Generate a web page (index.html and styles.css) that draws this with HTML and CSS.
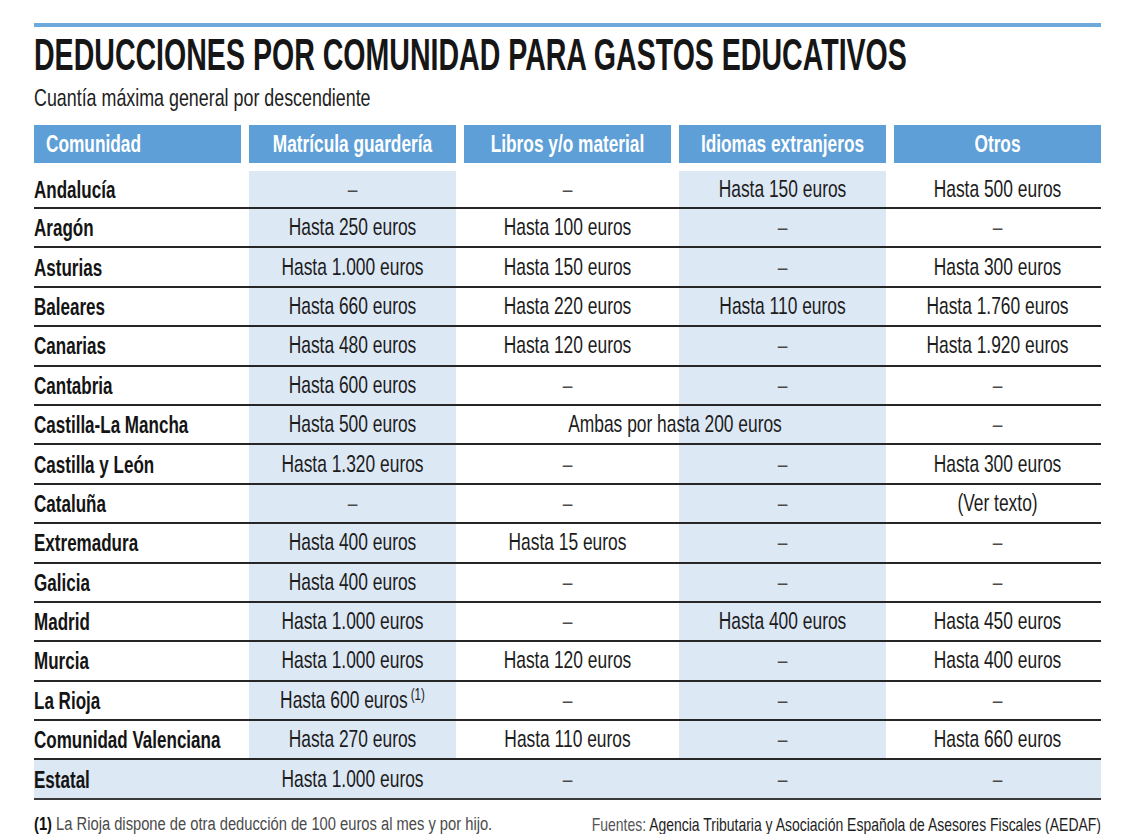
FILE: index.html
```html
<!DOCTYPE html>
<html lang="es">
<head>
<meta charset="utf-8">
<title>Deducciones por comunidad para gastos educativos</title>
<link rel="stylesheet" href="styles.css">
</head>
<body>
<div class="page">
  <div class="bar"></div>
  <h1 class="title"><span class="t">DEDUCCIONES POR COMUNIDAD PARA GASTOS EDUCATIVOS</span></h1>
  <p class="subtitle"><span class="t">Cuantía máxima general por descendiente</span></p>

  <div class="table">
    <div class="head">
      <div class="hc left"><span class="t">Comunidad</span></div>
      <div class="hc"><span class="t">Matrícula guardería</span></div>
      <div class="hc"><span class="t">Libros y/o material</span></div>
      <div class="hc"><span class="t">Idiomas extranjeros</span></div>
      <div class="hc"><span class="t">Otros</span></div>
    </div>

    <div class="row first">
      <div class="c name"><span class="t">Andalucía</span></div>
      <div class="c shade"><span class="t dash">–</span></div>
      <div class="c"><span class="t dash">–</span></div>
      <div class="c shade"><span class="t">Hasta 150 euros</span></div>
      <div class="c"><span class="t">Hasta 500 euros</span></div>
    </div>
    <div class="row">
      <div class="c name"><span class="t">Aragón</span></div>
      <div class="c shade"><span class="t">Hasta 250 euros</span></div>
      <div class="c"><span class="t">Hasta 100 euros</span></div>
      <div class="c shade"><span class="t dash">–</span></div>
      <div class="c"><span class="t dash">–</span></div>
    </div>
    <div class="row">
      <div class="c name"><span class="t">Asturias</span></div>
      <div class="c shade"><span class="t">Hasta 1.000 euros</span></div>
      <div class="c"><span class="t">Hasta 150 euros</span></div>
      <div class="c shade"><span class="t dash">–</span></div>
      <div class="c"><span class="t">Hasta 300 euros</span></div>
    </div>
    <div class="row">
      <div class="c name"><span class="t">Baleares</span></div>
      <div class="c shade"><span class="t">Hasta 660 euros</span></div>
      <div class="c"><span class="t">Hasta 220 euros</span></div>
      <div class="c shade"><span class="t">Hasta 110 euros</span></div>
      <div class="c"><span class="t">Hasta 1.760 euros</span></div>
    </div>
    <div class="row">
      <div class="c name"><span class="t">Canarias</span></div>
      <div class="c shade"><span class="t">Hasta 480 euros</span></div>
      <div class="c"><span class="t">Hasta 120 euros</span></div>
      <div class="c shade"><span class="t dash">–</span></div>
      <div class="c"><span class="t">Hasta 1.920 euros</span></div>
    </div>
    <div class="row">
      <div class="c name"><span class="t">Cantabria</span></div>
      <div class="c shade"><span class="t">Hasta 600 euros</span></div>
      <div class="c"><span class="t dash">–</span></div>
      <div class="c shade"><span class="t dash">–</span></div>
      <div class="c"><span class="t dash">–</span></div>
    </div>
    <div class="row">
      <div class="c name"><span class="t">Castilla-La Mancha</span></div>
      <div class="c shade"><span class="t">Hasta 500 euros</span></div>
      <div class="c span2"><span class="t">Ambas por hasta 200 euros</span></div>
      <div class="c"><span class="t dash">–</span></div>
    </div>
    <div class="row">
      <div class="c name"><span class="t">Castilla y León</span></div>
      <div class="c shade"><span class="t">Hasta 1.320 euros</span></div>
      <div class="c"><span class="t dash">–</span></div>
      <div class="c shade"><span class="t dash">–</span></div>
      <div class="c"><span class="t">Hasta 300 euros</span></div>
    </div>
    <div class="row">
      <div class="c name"><span class="t">Cataluña</span></div>
      <div class="c shade"><span class="t dash">–</span></div>
      <div class="c"><span class="t dash">–</span></div>
      <div class="c shade"><span class="t dash">–</span></div>
      <div class="c"><span class="t">(Ver texto)</span></div>
    </div>
    <div class="row">
      <div class="c name"><span class="t">Extremadura</span></div>
      <div class="c shade"><span class="t">Hasta 400 euros</span></div>
      <div class="c"><span class="t">Hasta 15 euros</span></div>
      <div class="c shade"><span class="t dash">–</span></div>
      <div class="c"><span class="t dash">–</span></div>
    </div>
    <div class="row">
      <div class="c name"><span class="t">Galicia</span></div>
      <div class="c shade"><span class="t">Hasta 400 euros</span></div>
      <div class="c"><span class="t dash">–</span></div>
      <div class="c shade"><span class="t dash">–</span></div>
      <div class="c"><span class="t dash">–</span></div>
    </div>
    <div class="row">
      <div class="c name"><span class="t">Madrid</span></div>
      <div class="c shade"><span class="t">Hasta 1.000 euros</span></div>
      <div class="c"><span class="t dash">–</span></div>
      <div class="c shade"><span class="t">Hasta 400 euros</span></div>
      <div class="c"><span class="t">Hasta 450 euros</span></div>
    </div>
    <div class="row">
      <div class="c name"><span class="t">Murcia</span></div>
      <div class="c shade"><span class="t">Hasta 1.000 euros</span></div>
      <div class="c"><span class="t">Hasta 120 euros</span></div>
      <div class="c shade"><span class="t dash">–</span></div>
      <div class="c"><span class="t">Hasta 400 euros</span></div>
    </div>
    <div class="row">
      <div class="c name"><span class="t">La Rioja</span></div>
      <div class="c shade"><span class="t">Hasta 600 euros<sup class="note">(1)</sup></span></div>
      <div class="c"><span class="t dash">–</span></div>
      <div class="c shade"><span class="t dash">–</span></div>
      <div class="c"><span class="t dash">–</span></div>
    </div>
    <div class="row">
      <div class="c name"><span class="t">Comunidad Valenciana</span></div>
      <div class="c shade"><span class="t">Hasta 270 euros</span></div>
      <div class="c"><span class="t">Hasta 110 euros</span></div>
      <div class="c shade"><span class="t dash">–</span></div>
      <div class="c"><span class="t">Hasta 660 euros</span></div>
    </div>
    <div class="row total">
      <div class="c name"><span class="t">Estatal</span></div>
      <div class="c"><span class="t">Hasta 1.000 euros</span></div>
      <div class="c"><span class="t dash">–</span></div>
      <div class="c"><span class="t dash">–</span></div>
      <div class="c"><span class="t dash">–</span></div>
    </div>
  </div>

  <div class="foot">
    <div class="fcol">
      <span class="t fl"><b class="num">(1)</b> La Rioja dispone de otra deducción de 100 euros al mes y por hijo.</span>
    </div>
    <div class="fcol right">
      <span class="t fr"><span class="light">Fuentes:</span> Agencia Tributaria y Asociación Española de Asesores Fiscales (AEDAF)</span>
    </div>
  </div>
</div>
</body>
</html>
```

FILE: styles.css
```css
html, body {
  margin: 0;
  padding: 0;
  background: #ffffff;
}

body {
  font-family: "Liberation Sans", Arial, sans-serif;
  color: #1c1c1c;
  overflow: hidden;
}

.page {
  width: 1067px;
  margin-left: 34px;
  padding-top: 23px;
}

.bar {
  height: 4px;
  background: #6ea9dc;
}

/* condensed look: glyphs set small and stretched vertically */
.t {
  display: inline-block;
  white-space: nowrap;
}

.title {
  margin: 6px 0 0;
  font-size: 28.56px;
  line-height: 44px;
  font-weight: 700;
  color: #161616;
  white-space: nowrap;
}

.title .t {
  transform: scaleY(1.541);
}

.subtitle {
  margin: 9px 0 0;
  font-size: 17.86px;
  line-height: 24px;
  color: #222;
}

.subtitle .t {
  transform: scaleY(1.344);
}

.table {
  margin-top: 15px;
}

.head,
.row {
  display: grid;
  grid-template-columns: repeat(5, 207px);
  column-gap: 8px;
}

.head {
  height: 38px;
  margin-bottom: 8px;
}

.hc {
  min-width: 0;
  background: #5e9fd7;
  color: #ffffff;
  font-size: 17.28px;
  font-weight: 700;
  display: flex;
  align-items: center;
  justify-content: center;
}

.hc .t {
  transform: scaleY(1.389);
}

.hc.left {
  justify-content: flex-start;
  padding-left: 12px;
}

.row {
  height: 39.4px;
  box-sizing: border-box;
  border-bottom: 2px solid #262626;
}

.row.first {
  height: 38px;
}

.row.total {
  background: #dde8f5;
  border-bottom-color: #3a3a3a;
}

.c {
  min-width: 0;
  font-size: 17.4px;
  display: flex;
  align-items: center;
  justify-content: center;
}

.c .t {
  transform: scaleY(1.379);
}

.c.name {
  justify-content: flex-start;
  padding-top: 3px;
  font-size: 17.04px;
  font-weight: 700;
  color: #141414;
}

.c.name .t {
  transform: scaleY(1.408);
}

.shade {
  background: #dde8f5;
}

.span2 {
  grid-column: span 2;
  background: linear-gradient(90deg, transparent 215px, #dde8f5 215px);
}

.dash {
  color: #4a4a4a;
}

.note {
  font-size: 11.6px;
  vertical-align: 5.8px;
  line-height: 0;
  margin-left: 3px;
}

.foot {
  margin-top: 15px;
  display: grid;
  grid-template-columns: 1fr 1fr;
  line-height: 19px;
  color: #4a4a4a;
}

.fcol {
  min-width: 0;
  display: flex;
  justify-content: flex-start;
}

.fcol.right {
  justify-content: flex-end;
}

.fl {
  font-size: 14.72px;
  transform: scaleY(1.29);
}

.fl .num {
  color: #111;
}

.fr {
  font-size: 13.98px;
  color: #1e1e1e;
  transform: scaleY(1.359);
}

.fr .light {
  color: #555;
}
```
